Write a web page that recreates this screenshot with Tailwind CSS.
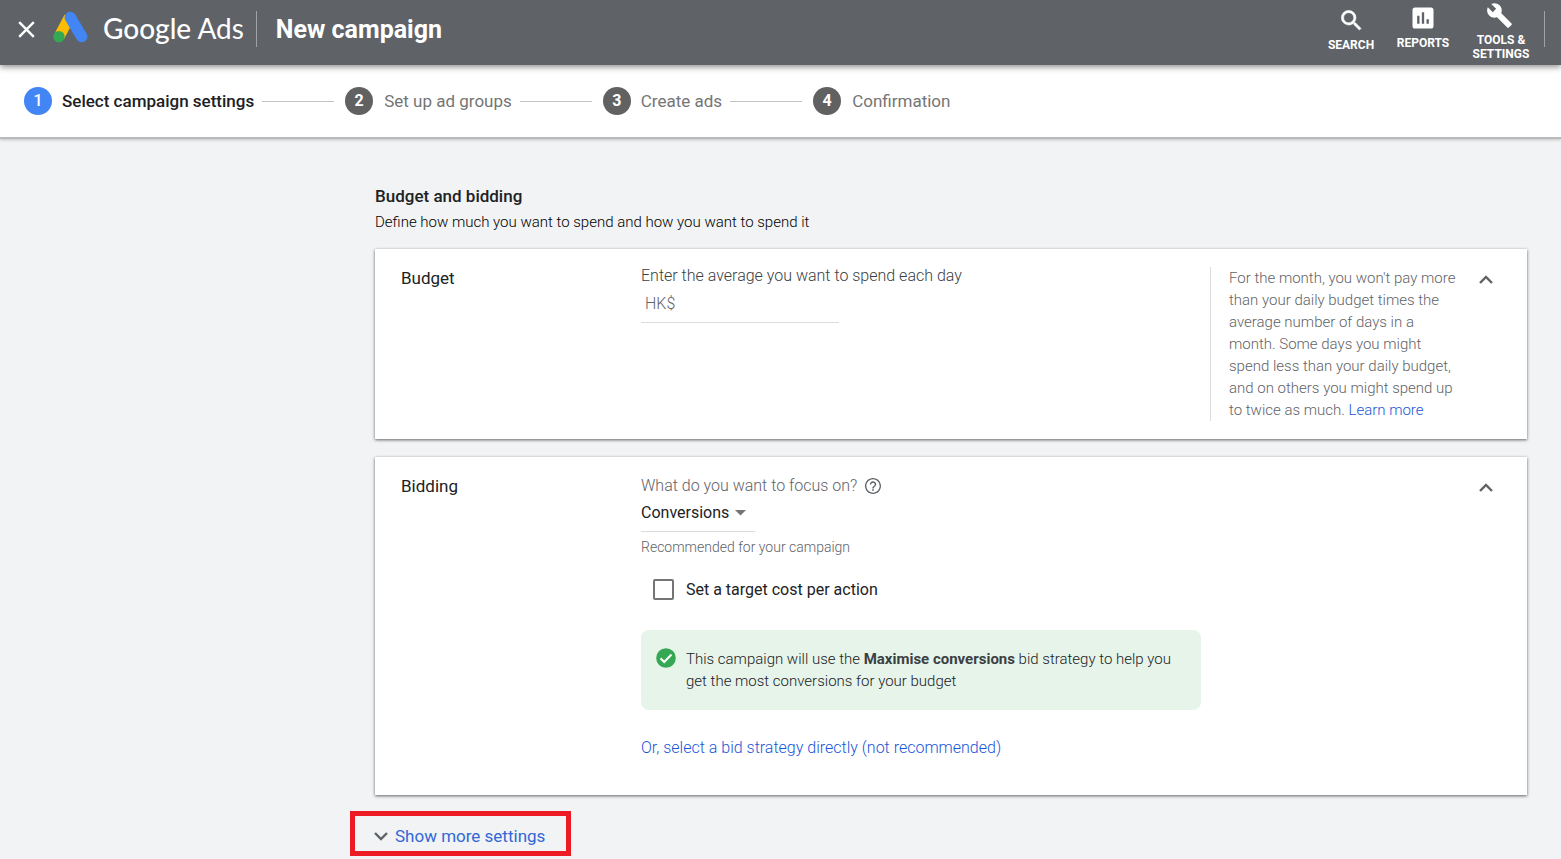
<!DOCTYPE html>
<html lang="en">
<head>
<meta charset="utf-8">
<title>New campaign - Google Ads</title>
<script src="https://cdn.jsdelivr.net/npm/@tailwindcss/browser@4"></script>
</head>
<body class="min-h-screen bg-[#f1f3f4] font-[Roboto,sans-serif] text-[#202124]">
<header class="relative z-10 flex h-[65px] items-start justify-between bg-[#5f6368] text-white shadow-[0_2px_6px_rgba(0,0,0,0.45)]">
  <div class="flex items-center pl-[18px] pt-[11px]">
    <button type="button" aria-label="Close" class="mr-[18px]">
      <svg class="block size-[17px]" viewBox="0 0 17 17" fill="none" stroke="currentColor" stroke-width="2.4"><path d="M1.2 1.2l14.6 14.6M15.8 1.2L1.2 15.8"/></svg>
    </button>
    <svg class="mb-1 block h-[32px] w-[36px]" viewBox="0 0 36 32" aria-hidden="true">
      <path d="M16.5 6L6.200 25.500" stroke="#fbbc04" stroke-width="11"/>
      <path d="M17.300 6.400L28.700 25.600" stroke="#4285f4" stroke-width="11.400" stroke-linecap="round"/>
      <circle cx="5.900" cy="25.600" r="5.700" fill="#34a853"/>
    </svg>
    <span class="mb-[2px] ml-[14px] font-[Lato,sans-serif] text-[28px] leading-[34px]"><span class="font-medium">Google</span> Ads</span>
    <span class="ml-3 h-9 w-px bg-white/40"></span>
    <h1 class="ml-[19px] pt-[2px] text-[25px] leading-[34px] font-bold">New campaign</h1>
  </div>
  <nav class="flex items-start text-center text-xs leading-[14px] font-bold">
    <button type="button" class="flex w-[72px] flex-col items-center pt-[7px]">
      <svg class="block size-[27px]" viewBox="0 0 24 24" fill="currentColor" stroke="currentColor" stroke-width="0.500"><path d="M15.500 14h-.79l-.28-.27A6.471 6.471 0 0 0 16 9.500 6.500 6.500 0 1 0 9.500 16c1.610 0 3.090-.59 4.230-1.570l.27.28v.79l5 4.990L20.490 19l-4.990-5zm-6 0C7.010 14 5 11.990 5 9.500S7.010 5 9.500 5 14 7.010 14 9.500 11.990 14 9.500 14z"/></svg>
      <span class="mt-1">SEARCH</span>
    </button>
    <button type="button" class="flex w-[72px] flex-col items-center pt-[4px]">
      <svg class="block size-[28px]" viewBox="0 0 24 24" fill="currentColor"><path d="M19 3H5c-1.100 0-2 .9-2 2v14c0 1.100.9 2 2 2h14c1.100 0 2-.9 2-2V5c0-1.100-.9-2-2-2zM9 17H7v-7h2v7zm4 0h-2V7h2v10zm4 0h-2v-4h2v4z"/></svg>
      <span class="mt-1">REPORTS</span>
    </button>
    <button type="button" class="flex w-[84px] flex-col items-center pt-[2px]">
      <svg class="mr-1 block size-[27px]" viewBox="0 0 24 24" fill="currentColor"><path d="M22.700 19l-9.100-9.100c.9-2.300.4-5-1.500-6.900-2-2-5-2.400-7.400-1.300L9 6 6 9 1.600 4.700C.4 7.100.9 10.100 2.900 12.100c1.900 1.900 4.600 2.400 6.900 1.500l9.100 9.100c.4.4 1 .4 1.400 0l2.300-2.300c.5-.4.5-1.100.1-1.400z"/></svg>
      <span class="mt-1">TOOLS &amp;<br>SETTINGS</span>
    </button>
    <span class="mt-[11px] mr-4 ml-px h-9 w-px bg-white/40"></span>
  </nav>
</header>

<ol class="flex h-[74px] items-center border-b-2 border-[#b9babb] bg-white pl-6 text-[17px] leading-6 text-[#757575] shadow-[0_1px_3px_rgba(0,0,0,0.2)]">
  <li class="flex items-center" aria-current="step"><span class="flex size-7 items-center justify-center rounded-full bg-[#4285f4] text-base font-medium text-white">1</span><span class="ml-[10px] font-medium text-[#202124]">Select campaign settings</span></li>
  <li class="flex items-center"><span class="mr-[11px] ml-2 h-px w-[72px] bg-[#c4c4c4]"></span><span class="flex size-7 items-center justify-center rounded-full bg-[#616161] text-base font-bold text-white">2</span><span class="ml-[11px]">Set up ad groups</span></li>
  <li class="flex items-center"><span class="mr-[11px] ml-2 h-px w-[72px] bg-[#c4c4c4]"></span><span class="flex size-7 items-center justify-center rounded-full bg-[#616161] text-base font-bold text-white">3</span><span class="ml-[10px]">Create ads</span></li>
  <li class="flex items-center"><span class="mr-[11px] ml-2 h-px w-[72px] bg-[#c4c4c4]"></span><span class="flex size-7 items-center justify-center rounded-full bg-[#616161] text-base font-bold text-white">4</span><span class="ml-[11px]">Confirmation</span></li>
</ol>

<main class="pt-[48px] pr-[34px] pl-[375px]">
  <h2 class="text-[17px] leading-[18px] font-medium">Budget and bidding</h2>
  <p class="mt-[6px] text-[15px] leading-[22px] font-light text-black">Define how much you want to spend and how you want to spend it</p>

  <section class="mt-4 flex items-start bg-white py-[18px] shadow-[0_1px_3px_rgba(0,0,0,0.6)]">
    <h3 class="w-[266px] shrink-0 pl-[26px] text-[17px] leading-[22px]">Budget</h3>
    <div class="flex-1">
      <label for="budget" class="block text-base leading-[18px] font-light text-[#3c4043]">Enter the average you want to spend each day</label>
      <input id="budget" type="text" placeholder="HK$" class="block h-[38px] w-[198px] border-b border-[#dadce0] px-1 text-base font-light outline-none placeholder:text-[#5f6368]">
    </div>
    <aside class="w-[250px] shrink-0 border-l border-[#dadce0] pr-[3px] pl-[18px] text-[15px] leading-[22px] font-light text-[#5f6368]">For the month, you won't pay more than your daily budget times the average number of days in a month. Some days you might spend less than your daily budget, and on others you might spend up to twice as much. <a href="#" class="text-[#1a56d6]">Learn more</a></aside>
    <button type="button" aria-label="Collapse budget" class="mr-[29px] ml-[14px] pt-px">
      <svg class="block size-6" viewBox="0 0 24 24" fill="none" stroke="#5f6368" stroke-width="2.400"><path d="M6 15l6-6 6 6"/></svg>
    </button>
  </section>

  <section class="mt-[18px] flex items-start bg-white pt-[18px] pb-[35px] shadow-[0_1px_3px_rgba(0,0,0,0.6)]">
    <h3 class="w-[266px] shrink-0 pl-[26px] text-[17px] leading-[22px]">Bidding</h3>
    <div class="flex-1">
      <div class="flex items-center text-base leading-[22px] font-light text-[#5f6368]">
        <label for="focus">What do you want to focus on?</label>
        <button type="button" aria-label="Help" class="ml-2">
          <svg class="block size-4" viewBox="2 2 20 20" fill="#5f6368"><path d="M11 18h2v-2h-2v2zm1-16C6.480 2 2 6.480 2 12s4.480 10 10 10 10-4.480 10-10S17.520 2 12 2zm0 18.300c-4.600 0-8.300-3.700-8.300-8.300S7.400 3.700 12 3.700s8.300 3.700 8.300 8.300-3.700 8.300-8.300 8.300zm0-14.300c-2.210 0-4 1.790-4 4h1.800c0-1.200 1-2.200 2.200-2.200s2.200 1 2.200 2.200c0 2-3.100 1.800-3.100 5h1.800c0-2.250 3.100-2.500 3.100-5 0-2.210-1.790-4-4-4z"/></svg>
        </button>
      </div>
      <div class="relative w-[114px]">
        <select id="focus" class="block h-[35px] w-full appearance-none border-b border-[#dadce0] bg-transparent pb-[2px] text-base text-[#202124] outline-none"><option>Conversions</option></select>
        <svg class="pointer-events-none absolute top-[13px] right-[9px] block h-[6px] w-[11px]" viewBox="0 0 11 6"><path d="M0 0h11L5.500 5.500z" fill="#757575"/></svg>
      </div>
      <p class="mt-[5px] text-sm leading-5 font-light text-[#5f6368]">Recommended for your campaign</p>
      <label class="mt-[22px] flex items-center pl-3 text-base leading-5"><input type="checkbox" class="mr-[12px] size-[21px] appearance-none rounded-[2px] border-2 border-[#757575] bg-white">Set a target cost per action</label>
      <div class="mt-[30px] flex w-[560px] items-start rounded-lg bg-[#e6f4ea] pt-[18px] pr-6 pb-[18px] pl-[15px] text-[15px] leading-[22px] font-light text-[#202124]">
        <svg class="mr-[10px] block size-5 shrink-0" viewBox="0 0 20 20"><circle cx="10" cy="10" r="9.800" fill="#34a853"/><path d="M4.500 10.300l3.700 3.700 7.300-7.500" fill="none" stroke="#fff" stroke-width="2"/></svg>
        <p>This campaign will use the <b class="font-bold text-[#3c4043]">Maximise conversions</b> bid strategy to help you get the most conversions for your budget</p>
      </div>
      <a href="#" class="mt-[27px] inline-block text-base leading-[22px] font-light text-[#1a56d6]">Or, select a bid strategy directly (not recommended)</a>
    </div>
    <button type="button" aria-label="Collapse bidding" class="mr-[29px] ml-[14px] pt-px">
      <svg class="block size-6" viewBox="0 0 24 24" fill="none" stroke="#5f6368" stroke-width="2.400"><path d="M6 15l6-6 6 6"/></svg>
    </button>
  </section>

  <button type="button" class="mt-4 -ml-[25px] flex h-[45px] w-[221px] items-center border-[5px] border-[#ed1c24] pl-[14px] pt-[6px] text-[17px] text-[#3367d6]">
    <svg class="mr-[2px] mb-[2px] block size-6" viewBox="0 0 24 24" fill="none" stroke="#5f6368" stroke-width="2.400"><path d="M6 9l6 6 6-6"/></svg>Show more settings
  </button>
</main>
</body>
</html>
